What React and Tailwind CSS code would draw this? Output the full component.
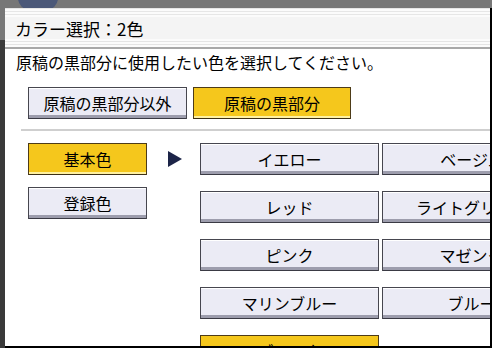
import React from "react";

const font = { fontFamily: '"Noto Sans CJK JP", "Noto Sans", sans-serif' };

function Btn({ label, active, className = "" }) {
  return (
    <div
      className={`flex items-center justify-center h-[32px] shrink-0 border border-b-0 text-[16px] text-black leading-none whitespace-nowrap ${
        active
          ? "bg-[#f5c71c] border-[#4d3b18] shadow-[inset_0_-1px_0_#3d2f14,inset_0_-3px_0_#fff1a0]"
          : "bg-[#ebebf5] border-[#46464f] shadow-[inset_0_1px_0_#ffffff,inset_0_-1px_0_#3a3a44,inset_0_-4px_0_#9d9dad]"
      } ${className}`}
    >
      <span className="pb-[2px]">{label}</span>
    </div>
  );
}

const colors = [
  ["イエロー", "ベージュ"],
  ["レッド", "ライトグリーン"],
  ["ピンク", "マゼンタ"],
  ["マリンブルー", "ブルー"],
  ["ブラック", null],
];

export default function App() {
  return (
    <div className="relative w-[492px] h-[348px] bg-[#777777] overflow-hidden" style={font}>
      {/* backdrop bits */}
      <div className="absolute left-[18px] top-[-14px] w-[40px] h-[24px] rounded-full bg-[#4b5878]" />
      <div className="absolute left-0 top-[40px] w-[5px] h-[308px] bg-[#3a3a3a]" />

      <div className="relative ml-[5px] mt-[8px] w-[487px] h-[340px] bg-white border-r-2 border-b-2 border-black overflow-hidden">
        {/* header */}
        <div className="h-[39px] bg-[#f4f4f4] flex flex-col">
          <div className="h-[9px] bg-[repeating-linear-gradient(to_bottom,#e6e6e6_0px,#e6e6e6_1px,#fbfbfb_1px,#fbfbfb_3px)]" />
          <div className="flex-1 flex items-center pl-[10px] text-[17px] text-black leading-none">
            カラー選択：2色
          </div>
          <div className="h-[8px] bg-[repeating-linear-gradient(to_bottom,#fbfbfb_0px,#fbfbfb_2px,#e4e4e4_2px,#e4e4e4_3px)]" />
        </div>
        <div className="h-[2px] bg-[#a8a8a8]" />

        {/* body */}
        <div className="pl-[11px] pt-[3px] h-[23px] text-[16px] leading-[20px] text-black">
          原稿の黒部分に使用したい色を選択してください。
        </div>

        <div className="flex gap-[6px] pl-[23px] mt-[15px]">
          <Btn label="原稿の黒部分以外" className="w-[159px]" />
          <Btn label="原稿の黒部分" active className="w-[158px]" />
        </div>

        <div className="ml-[16px] mt-[10px] h-[2px] bg-[#cfcfcf]" />

        <div className="flex pl-[23px] mt-[12px]">
          <div className="flex flex-col gap-[12px] w-[119px] shrink-0">
            <Btn label="基本色" active />
            <Btn label="登録色" />
          </div>
          <div className="w-[53px] shrink-0 flex justify-center pt-[8px]">
            <svg width="16" height="16" viewBox="0 0 16 16" className="ml-[2px]">
              <polygon points="1,0 15,8 1,16" fill="#1c2448" />
            </svg>
          </div>
          <div className="grid grid-cols-[179px_179px] gap-x-[3px] gap-y-[16px] shrink-0">
            {colors.map(([a, b]) => (
              <React.Fragment key={a}>
                <Btn label={a} active={a === "ブラック"} />
                {b ? <Btn label={b} /> : <div />}
              </React.Fragment>
            ))}
          </div>
        </div>
      </div>
    </div>
  );
}
